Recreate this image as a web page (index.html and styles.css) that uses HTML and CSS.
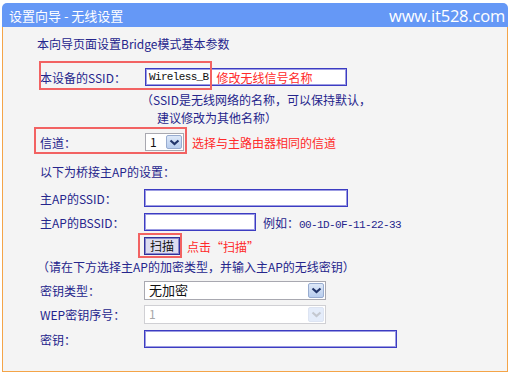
FILE: index.html
```html
<!DOCTYPE html>
<html lang="zh-CN">
<head>
<meta charset="utf-8">
<title>设置向导 - 无线设置</title>
<link rel="stylesheet" href="styles.css">
</head>
<body>
<div class="frame">
  <div class="header">
    <span class="htitle">设置向导 - 无线设置</span>
    <span class="wm">www.it528.com</span>
  </div>
  <div class="panel">
    <div class="line title">本向导页面设置Bridge模式基本参数</div>

    <div class="row r-ssid">
      <span class="label">本设备的SSID：</span>
      <div class="input ssid-in">
        <span class="val">Wireless_B</span>
        <span class="hint">修改无线信号名称</span>
      </div>
      <div class="mark m-ssid"></div>
    </div>
    <div class="line note1">（SSID是无线网络的名称，可以保持默认，</div>
    <div class="line note2">建议修改为其他名称）</div>

    <div class="row r-chan">
      <span class="label">信道：</span>
      <div class="select sel-chan">
        <span class="sval">1</span>
        <span class="sbtn"><svg width="11" height="7" viewBox="0 0 11 7"><polyline points="1.5,1.5 5.5,5 9.5,1.5" fill="none" stroke="#22356a" stroke-width="2.2"/></svg></span>
      </div>
      <span class="hint">选择与主路由器相同的信道</span>
      <div class="mark m-chan"></div>
    </div>

    <div class="line sub">以下为桥接主AP的设置：</div>

    <div class="row r-apssid">
      <span class="label">主AP的SSID：</span>
      <div class="input w-ssid"></div>
    </div>
    <div class="row r-bssid">
      <span class="label">主AP的BSSID：</span>
      <div class="input w-bssid"></div>
      <span class="example">例如：<span class="mono">00-1D-0F-11-22-33</span></span>
    </div>
    <div class="row r-scan">
      <span class="label"></span>
      <button class="btn">扫描</button>
      <span class="hint">点击“扫描”</span>
      <div class="mark m-scan"></div>
    </div>
    <div class="line note3">（请在下方选择主AP的加密类型，并输入主AP的无线密钥）</div>

    <div class="row tall r-ktype">
      <span class="label">密钥类型：</span>
      <div class="select sel-wide">
        <span class="sval dark">无加密</span>
        <span class="sbtn"><svg width="11" height="7" viewBox="0 0 11 7"><polyline points="1.5,1.5 5.5,5 9.5,1.5" fill="none" stroke="#22356a" stroke-width="2.2"/></svg></span>
      </div>
    </div>
    <div class="row tall r-wep">
      <span class="label">WEP密钥序号：</span>
      <div class="select sel-wide disabled">
        <span class="sval">1</span>
        <span class="sbtn"><svg width="11" height="7" viewBox="0 0 11 7"><polyline points="1.5,1.5 5.5,5 9.5,1.5" fill="none" stroke="#c4c8d0" stroke-width="2.2"/></svg></span>
      </div>
    </div>
    <div class="row r-key">
      <span class="label">密钥：</span>
      <div class="input w-key"></div>
    </div>
  </div>
</div>
</body>
</html>
```

FILE: styles.css
```css
* { box-sizing: border-box; }
html, body { margin: 0; padding: 0; background: #ffffff; }
body {
  font-family: "Noto Sans CJK SC", "Noto Sans", sans-serif;
  font-size: 12px;
  color: #25258c;
}
.frame {
  margin: 3px 2px 0 2px;
  width: 506px;
}
.header {
  height: 24px;
  background: #6598f6;
  border-radius: 5px 5px 0 0;
  display: flex;
  align-items: center;
  justify-content: space-between;
  padding: 0 3px 0 7px;
  color: #ffffff;
}
.htitle { font-size: 13px; }
.wm {
  font-family: "Open Sans", "DejaVu Sans", sans-serif;
  font-size: 16.5px;
  letter-spacing: -0.2px;
}
.panel {
  background: #f4f4f4;
  border-left: 1px solid #f4a448;
  border-right: 1px solid #f4a448;
  border-bottom: 1px solid #f4a448;
  height: 345px;
  padding: 8px 0 0 34px;
}
.line { height: 18px; line-height: 18px; white-space: nowrap; }
.row {
  position: relative;
  display: flex;
  align-items: center;
  height: 18px;
  white-space: nowrap;
}
.row.tall { height: 19px; }
.label { width: 107px; padding-left: 3px; flex: none; }
.mark {
  position: absolute;
  border: 2px solid #f26262;
  pointer-events: none;
}
.hint { color: #ff2a2a; font-size: 12px; }
.mono { font-family: "Liberation Mono", monospace; font-size: 11px; letter-spacing: -0.6px; }

.input {
  height: 18px;
  background: #ffffff;
  border: 1px solid #3c3cc2;
  box-shadow: inset 0 0 0 1px #9c9ce2;
  display: flex;
  align-items: center;
}

.r-ssid { margin-top: 15px; }
.ssid-in { margin-left: 1px; width: 202px; padding-left: 3px; }
.val {
  font-family: "Liberation Mono", monospace;
  font-size: 11px;
  letter-spacing: -0.65px;
  color: #111111;
  margin-right: 8px;
}
.m-ssid { left: 2px; top: -7px; width: 173px; height: 29px; }

.note1 { margin-top: 5px; padding-left: 104px; }
.note2 { padding-left: 120px; }

.r-chan { margin-top: 6px; }
.select {
  height: 18px;
  display: flex;
  align-items: stretch;
  background: #ffffff;
  border: 1px solid #a8a8b0;
  padding: 1px;
}
.sel-chan { margin-left: 1px; width: 39px; margin-right: 8px; }
.sval { flex: 1; padding-left: 3px; line-height: 14px; color: #111; font-size: 12px; }
.sval.dark { font-size: 13px; }
.sbtn {
  width: 16px;
  flex: none;
  background: linear-gradient(#dde8f8, #b8cdee);
  border: 1px solid #98acd0;
  border-radius: 2px;
  display: flex;
  align-items: center;
  justify-content: center;
}
.m-chan { left: -3px; top: -6px; width: 153px; height: 27px; }

.sub { margin-top: 12px; padding-left: 3px; }

.r-apssid { margin-top: 8px; }
.w-ssid { width: 204px; }
.r-bssid { margin-top: 6px; }
.w-bssid { width: 112px; margin-right: 7px; }
.example { color: #25258c; }

.r-scan { margin-top: 6px; }
.btn {
  margin: 0;
  width: 36px;
  height: 18px;
  padding: 0;
  font-family: "Noto Sans CJK SC", sans-serif;
  font-size: 12px;
  color: #111111;
  background: #dcdcf0;
  border: 1px solid #30309c;
  box-shadow: inset 0 0 0 1px #8888cc;
  margin-right: 7px;
  line-height: 14px;
}
.m-scan { left: 101px; top: -4px; width: 44px; height: 25px; }

.note3 { margin-top: 3px; }

.r-ktype { margin-top: 5px; }
.sel-wide { width: 182px; height: 19px; }
.r-wep { margin-top: 5px; }
.disabled { border-color: #d0d0d4; }
.disabled .sval { color: #a8a8a8; }
.disabled .sbtn { background: #e4ecfa; border-color: #dde4f2; }
.r-key { margin-top: 6px; }
.w-key { width: 253px; }
```
